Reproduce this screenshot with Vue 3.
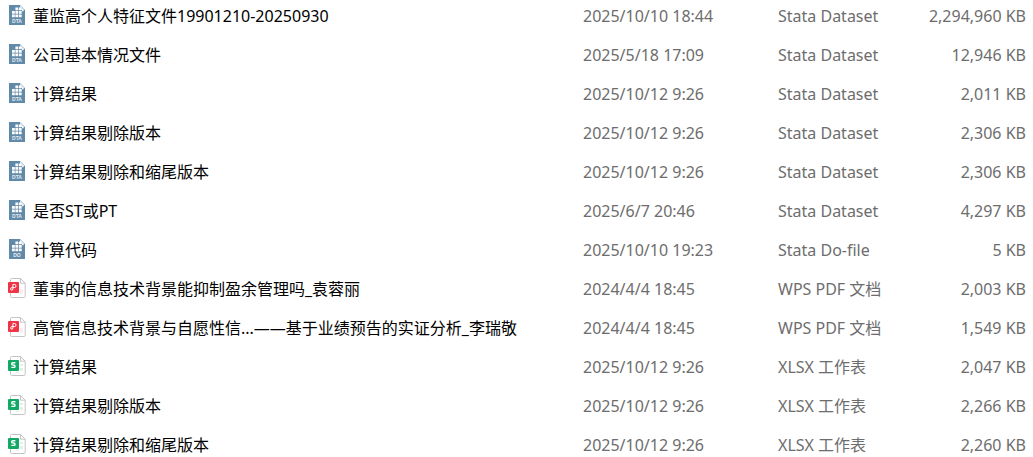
<script setup>
const files = [
  { icon: 'dta', name: '董监高个人特征文件19901210-20250930', date: '2025/10/10 18:44', type: 'Stata Dataset', size: '2,294,960 KB' },
  { icon: 'dta', name: '公司基本情况文件', date: '2025/5/18 17:09', type: 'Stata Dataset', size: '12,946 KB' },
  { icon: 'dta', name: '计算结果', date: '2025/10/12 9:26', type: 'Stata Dataset', size: '2,011 KB' },
  { icon: 'dta', name: '计算结果剔除版本', date: '2025/10/12 9:26', type: 'Stata Dataset', size: '2,306 KB' },
  { icon: 'dta', name: '计算结果剔除和缩尾版本', date: '2025/10/12 9:26', type: 'Stata Dataset', size: '2,306 KB' },
  { icon: 'dta', name: '是否ST或PT', date: '2025/6/7 20:46', type: 'Stata Dataset', size: '4,297 KB' },
  { icon: 'do', name: '计算代码', date: '2025/10/10 19:23', type: 'Stata Do-file', size: '5 KB' },
  { icon: 'pdf', name: '董事的信息技术背景能抑制盈余管理吗_袁蓉丽', date: '2024/4/4 18:45', type: 'WPS PDF 文档', size: '2,003 KB' },
  { icon: 'pdf', name: '高管信息技术背景与自愿性信...——基于业绩预告的实证分析_李瑞敬', date: '2024/4/4 18:45', type: 'WPS PDF 文档', size: '1,549 KB' },
  { icon: 'xlsx', name: '计算结果', date: '2025/10/12 9:26', type: 'XLSX 工作表', size: '2,047 KB' },
  { icon: 'xlsx', name: '计算结果剔除版本', date: '2025/10/12 9:26', type: 'XLSX 工作表', size: '2,266 KB' },
  { icon: 'xlsx', name: '计算结果剔除和缩尾版本', date: '2025/10/12 9:26', type: 'XLSX 工作表', size: '2,260 KB' },
]
</script>

<template>
  <table class="files">
    <colgroup>
      <col />
      <col class="col-date" />
      <col class="col-type" />
      <col class="col-size" />
    </colgroup>
    <tbody>
      <tr v-for="(file, i) in files" :key="i">
        <td class="name">
          <div class="entry">
            <svg v-if="file.icon === 'dta' || file.icon === 'do'" class="icon" viewBox="0 0 18 20" aria-hidden="true">
              <path d="M1 0H12L17 5V20H1Z" fill="#6189a8" />
              <path d="M12 0L17 5H12Z" fill="#d3dee7" />
              <g fill="#fff">
                <path d="M7.4 2.4h2.8v2.8H7.4zM10.9 2.4h2.6v2.8h-2.6z" />
                <path d="M4 5.9h2.8v2.8H4zM7.4 5.9h2.8v2.8H7.4zM10.9 5.9h2.8v2.8h-2.8zM14 4.4h1.6v1.8H14z" />
                <path d="M4 9.4h2.8v2.8H4zM7.4 9.4h2.8v2.8H7.4zM10.9 9.4h2.8v2.8h-2.8z" />
              </g>
              <text class="tag" x="9" y="18" text-anchor="middle">{{ file.icon === 'do' ? 'DO' : 'DTA' }}</text>
            </svg>
            <svg v-else class="icon" viewBox="0 0 18 20" aria-hidden="true">
              <path d="M3.5 .5H12.5L17.2 5.2V18.5Q17.2 19.5 16.2 19.5H3.5Q2.5 19.5 2.5 18.5V1.5Q2.5 .5 3.5 .5Z" fill="#fff" stroke="#c4c4c4" />
              <path d="M12.5 .5V5.2H17.2" fill="none" stroke="#c4c4c4" />
              <path v-if="file.icon === 'pdf'" d="M12 11h3v5h-3z" fill="#fdecee" />
              <path v-else d="M12 8h3v2h-3zM12 12h3v3h-3zM8 16h3v1H8z" fill="#dcf3e7" />
              <rect y="4" width="11" height="11" rx="1" :fill="file.icon === 'pdf' ? '#ee3445' : '#12a866'" />
              <path v-if="file.icon === 'pdf'" d="M4.9 9.6V6.4H6.4Q8 6.4 8 8Q8 9.6 6.4 9.6H3.9Q2.6 9.6 2.6 10.9Q2.6 12.2 3.8 12.2Q4.9 12.2 4.9 10.9V9.6" fill="none" stroke="#fff" />
              <path v-else d="M7.4 6.7H4.8Q3.6 6.7 3.6 7.9Q3.6 9 5.3 9Q7.1 9 7.1 10.2Q7.1 11.4 5.7 11.4H3.3" fill="none" stroke="#fff" stroke-width="1.4" />
            </svg>
            <span>{{ file.name }}</span>
          </div>
        </td>
        <td>{{ file.date }}</td>
        <td>{{ file.type }}</td>
        <td class="size">{{ file.size }}</td>
      </tr>
    </tbody>
  </table>
</template>

<style>
body {
  margin: 0;
  background: #fff;
}
</style>

<style scoped>
.files {
  width: 100%;
  table-layout: fixed;
  border-collapse: collapse;
  font-family: "Noto Sans", "Noto Sans CJK SC", sans-serif;
  font-size: 16px;
  line-height: 24px;
  color: #6d6d6d;
}

.col-date {
  width: 195px;
}

.col-type {
  width: 135px;
}

.col-size {
  width: 120px;
}

td {
  height: 24px;
  padding: 4px 0 11px;
  vertical-align: top;
  white-space: nowrap;
}

tr:last-child td {
  padding-bottom: 0;
}

.name {
  color: #000;
}

.entry {
  display: flex;
  align-items: center;
  gap: 7px;
  height: 24px;
  padding-left: 8px;
}

.icon {
  flex: none;
  width: 18px;
  height: 20px;
  padding-bottom: 2px;
}

.tag {
  fill: #e4ecf2;
  font-family: "Liberation Sans", sans-serif;
  font-size: 5px;
  font-weight: 700;
}

.size {
  padding-right: 7px;
  text-align: right;
}
</style>
